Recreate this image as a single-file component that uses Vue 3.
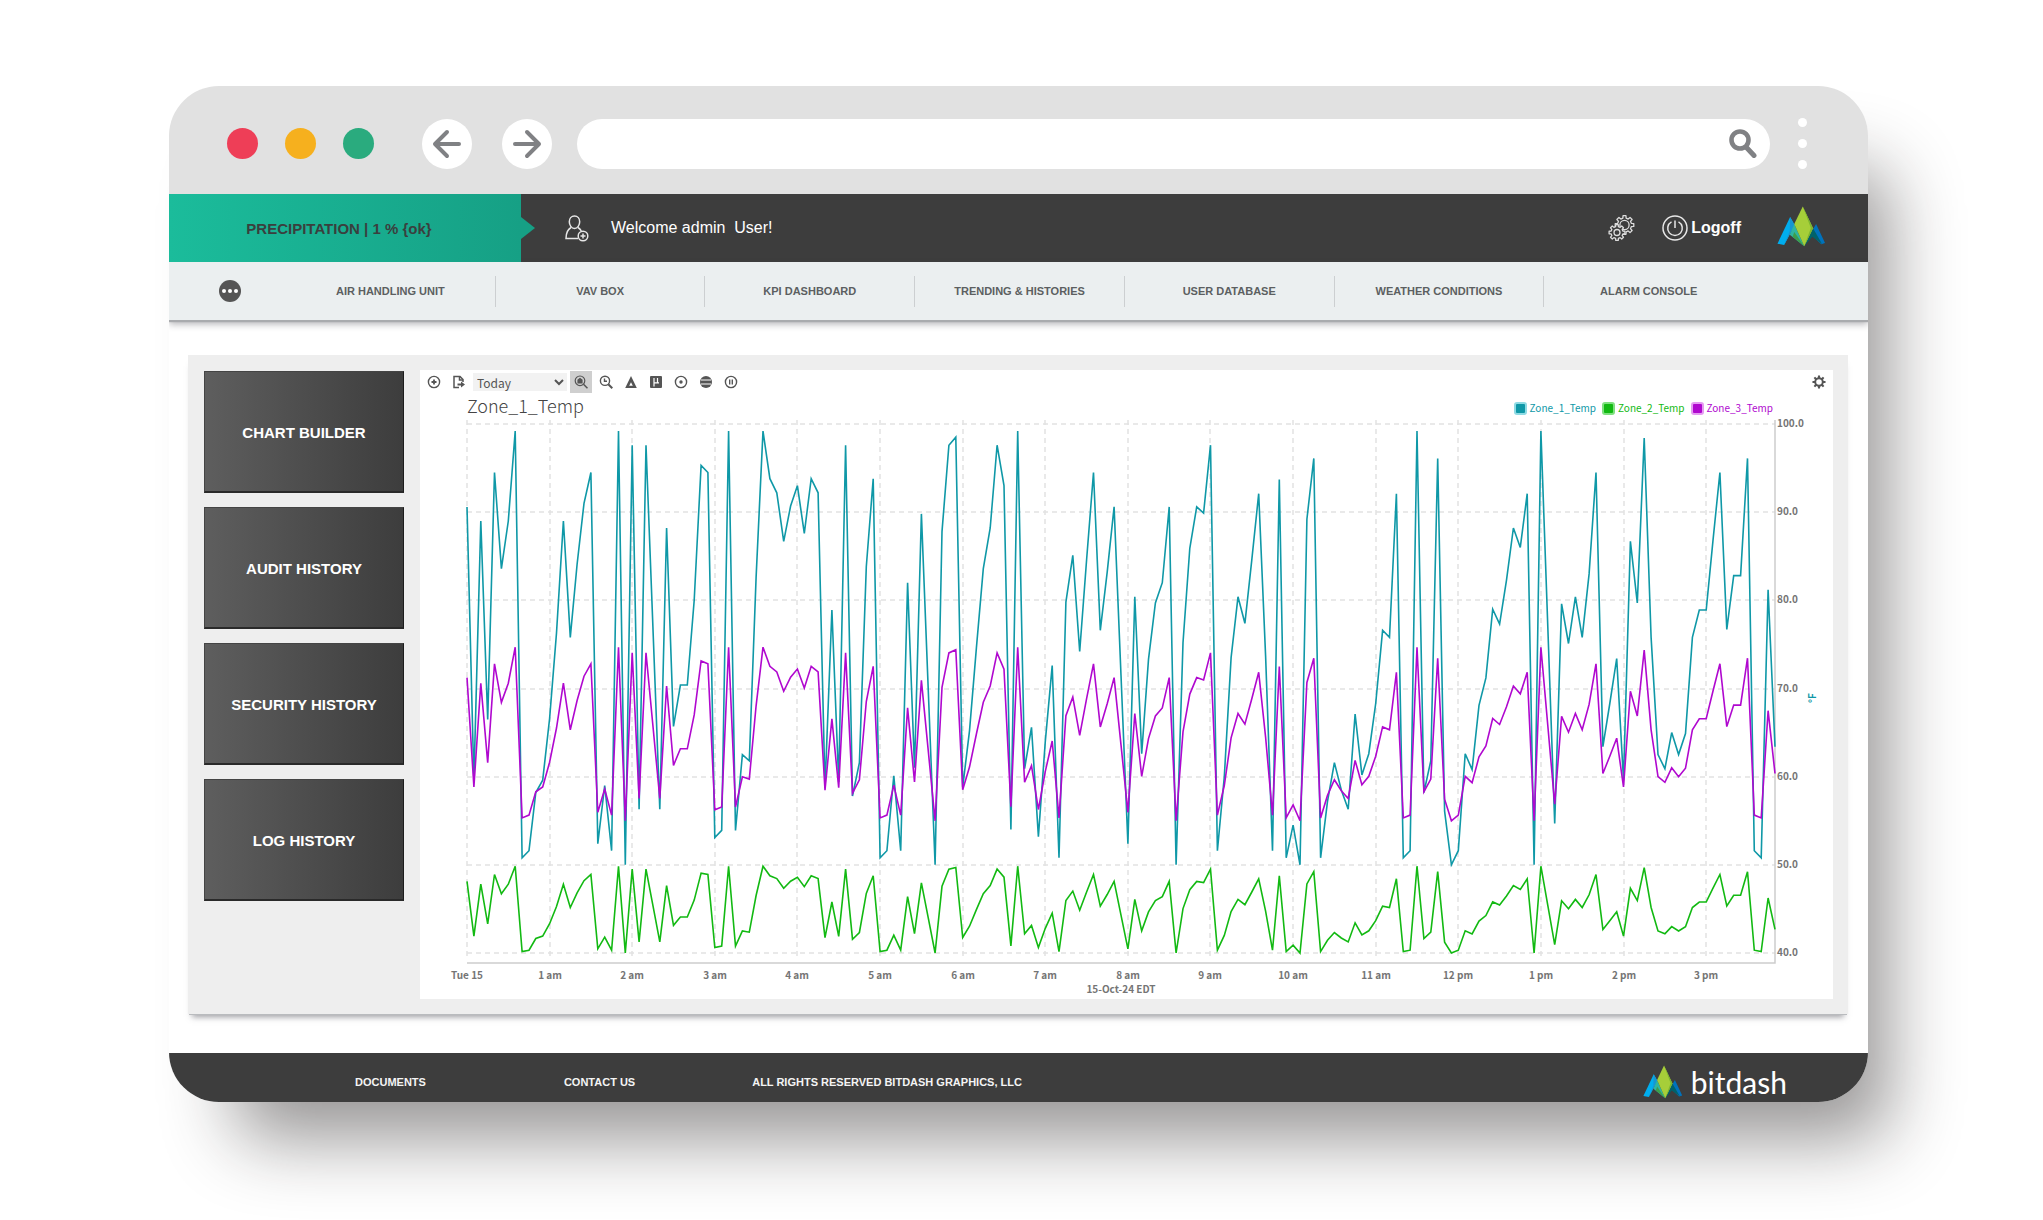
<script setup>
const navItems = [
  'AIR HANDLING UNIT',
  'VAV BOX',
  'KPI DASHBOARD',
  'TRENDING & HISTORIES',
  'USER DATABASE',
  'WEATHER CONDITIONS',
  'ALARM CONSOLE',
]

const historyButtons = ['CHART BUILDER', 'AUDIT HISTORY', 'SECURITY HISTORY', 'LOG HISTORY']

// Zone 1 temperature in °F, one sample every five minutes from midnight
const zone1 = [
  90.6, 59.6, 89, 66.5, 94.5, 83.6, 89, 99.2, 50.8, 51.6, 58.2, 59.6,
  66.6, 76.3, 89, 75.8, 84.1, 91, 94.5, 52.4, 59, 51.6, 99.2, 50,
  97.6, 56.3, 97.6, 77, 56.3, 88.2, 65.7, 70.4, 70.4, 80, 95.3, 94.5,
  53.1, 53.9, 99.2, 53.9, 62.5, 61.8, 82.6, 99.2, 93.8, 92.2, 86.7, 90.7,
  93, 87.6, 93.8, 92.2, 58.7, 78.9, 59.4, 97.6, 57.8, 61.6, 83.8, 93.8,
  50.8, 51.6, 60.1, 51.6, 82, 61, 89.8, 70, 50, 87.8, 97.6, 98.5,
  58.8, 65.2, 74.6, 83.6, 88.2, 97.6, 93, 54, 99.2, 60.9, 65.6, 53.2,
  64, 72.6, 50.8, 79.8, 85.1, 74.2, 84.6, 94.5, 76.6, 83.2, 90.6, 71.5,
  52.4, 80.4, 62.6, 73.3, 79.7, 82, 90.6, 50, 75.2, 85.9, 90.6, 89.9,
  97.6, 51.6, 60, 73.5, 80.4, 77.4, 84.6, 92.1, 73.7, 51.6, 93.7, 50.8,
  54.5, 50, 89.2, 96.1, 50.8, 57.2, 61.6, 58.5, 56.3, 67.1, 60.2, 62.6,
  68.3, 76.6, 75.8, 92.1, 50.8, 51.6, 99.2, 58.2, 61.8, 96.1, 56.1, 50,
  51.6, 62.6, 60.8, 68.1, 71.2, 79, 77.3, 82.3, 88.2, 86, 92.1, 50,
  99.2, 77, 54.7, 79.6, 75.1, 80.4, 75.8, 83, 94.5, 63.4, 68.3, 73.4,
  59.6, 86.7, 79.7, 98.4, 75.8, 62.5, 60.9, 65, 62.5, 64.9, 75.8, 78.9,
  78.9, 86.8, 94.5, 76.7, 82.8, 82.8, 96.1, 51.6, 50.8, 81.2, 63.4,
]

const plot = { left: 47, right: 1355, top: 6, hundred: 6, perDegree: 529 / 60, base: 545 }
const step = (plot.right - plot.left) / (zone1.length - 1)
const xAt = (i) => plot.left + i * step
const yAt = (v) => plot.hundred + (100 - v) * plot.perDegree
const line = (values) => values.map((v, i) => `${xAt(i).toFixed(1)},${yAt(v).toFixed(1)}`).join(' ')

const series = [
  { name: 'Zone_1_Temp', color: '#0f98a7', halo: '#8fdbe4', points: line(zone1) },
  { name: 'Zone_2_Temp', color: '#12b912', halo: '#7fe07f', points: line(zone1.map((v) => 40 + (v - 50) * 0.2)) },
  { name: 'Zone_3_Temp', color: '#b008cf', halo: '#e59af2', points: line(zone1.map((v) => 55 + (v - 50) * 0.4)) },
]

const hours = [
  'Tue 15', '1 am', '2 am', '3 am', '4 am', '5 am', '6 am', '7 am', '8 am',
  '9 am', '10 am', '11 am', '12 pm', '1 pm', '2 pm', '3 pm',
].map((label, i) => ({ label, x: Math.round(xAt(i * 12)) }))

const degrees = [100, 90, 80, 70, 60, 50, 40].map((v) => ({ label: v.toFixed(1), y: Math.round(yAt(v)) }))

// Outline of a cog wheel with rounded-looking teeth
function cog(cx, cy, teeth, outer, inner) {
  const pts = []
  const pitch = (Math.PI * 2) / teeth
  for (let i = 0; i < teeth; i++) {
    const a = i * pitch - Math.PI / 2
    ;[[-0.3, inner], [-0.2, outer], [0.2, outer], [0.3, inner]].forEach(([f, r]) => {
      pts.push(`${(cx + r * Math.cos(a + f * pitch)).toFixed(2)} ${(cy + r * Math.sin(a + f * pitch)).toFixed(2)}`)
    })
  }
  return `M${pts.join('L')}Z`
}
const settingsCog = cog(7, 7, 8, 6.6, 4.8)
const bigCog = cog(16.5, 10, 8, 9.4, 7)
const smallCog = cog(9, 17.5, 8, 8, 6)
</script>

<template>
  <main class="stage">
    <div class="window">
      <div class="chrome">
        <div class="lights">
          <span class="light red"></span>
          <span class="light amber"></span>
          <span class="light green"></span>
        </div>
        <div class="arrows">
          <button class="round" type="button" aria-label="Back">
            <svg width="30" height="30" viewBox="0 0 30 30" fill="none" stroke="#808184" stroke-width="4" stroke-linecap="round" stroke-linejoin="round"><path d="M27 15H4M15 3L3 15l12 12" /></svg>
          </button>
          <button class="round" type="button" aria-label="Forward">
            <svg width="30" height="30" viewBox="0 0 30 30" fill="none" stroke="#808184" stroke-width="4" stroke-linecap="round" stroke-linejoin="round"><path d="M3 15h23M15 3l12 12-12 12" /></svg>
          </button>
        </div>
        <div class="address">
          <input type="text" aria-label="Address" />
          <button type="button" aria-label="Search">
            <svg width="28" height="29" viewBox="0 0 28 29" fill="none" stroke="#808184"><circle cx="11" cy="11" r="8.5" stroke-width="4.6" /><path d="M17.500 18.500L25 26.500" stroke-width="5" stroke-linecap="round" /></svg>
          </button>
        </div>
        <button class="kebab" type="button" aria-label="Menu"><i></i><i></i><i></i></button>
      </div>

      <header class="topbar">
        <div class="weather">PRECIPITATION | 1 % {ok}</div>
        <div class="user">
          <svg width="24" height="27" viewBox="0 0 24 27" fill="none" stroke="#e6e6e6" stroke-width="1.500">
            <path d="M9.500 1c3.200 0 5.200 2.600 5.200 5.800S12.500 13.500 9.500 13.500 4.300 10 4.300 6.800 6.300 1 9.500 1z" />
            <path d="M6 12.500C2.500 14.500 1 17.500 1 23.500h12M13 12.500c1.500.9 2.600 2 3.300 3.500" />
            <circle cx="18" cy="21" r="4.800" /><path d="M18 18.500v5M15.500 21h5" />
          </svg>
          <span>Welcome admin&nbsp; User!</span>
        </div>
        <button class="plain" type="button" aria-label="Settings">
          <svg width="27" height="27" viewBox="0 0 27 27" fill="none" stroke="#dcdcdc" stroke-width="1.300" stroke-linejoin="round">
            <path :d="bigCog" /><circle cx="16.500" cy="10" r="4.600" />
            <path :d="smallCog" fill="#3d3d3d" /><circle cx="9" cy="17.500" r="3" />
          </svg>
        </button>
        <button class="plain logoff" type="button">
          <svg width="26" height="26" viewBox="0 0 26 26" fill="none" stroke="#e6e6e6" stroke-width="1.500">
            <circle cx="13" cy="13" r="12" /><path d="M9.500 6.800a7.300 7.300 0 1 0 7 0M13 5.500V13" />
          </svg>
          Logoff
        </button>
        <svg class="mark" width="49" height="41" viewBox="0 0 50 41" role="img" aria-label="Bitdash">
          <path d="M.5 38L13.400 10.700 18 19 7.300 39.300Z" fill="#00aeef" />
          <path d="M13.400 10.700L18 19 7.300 39.300 13 25Z" fill="#1795d1" />
          <path d="M17.600 18L27.800 40.700 13 29Z" fill="#2fb5a0" />
          <path d="M17.600 26L27.800 40.700 16 31Z" fill="#3d9e4a" />
          <path d="M39.900 18L49 37.300 45.200 38.700 34 28Z" fill="#0072bc" />
          <path d="M36.800 22.300L46 38.400 36 31 27.800 40.700Z" fill="#00626b" />
          <path d="M26.300 0L36.800 22.300 27.800 40.700 17.600 18Z" fill="#a6ce39" />
          <path d="M26.300 0L36.800 22.300 27.800 40.700 34.500 22Z" fill="#7db52f" />
        </svg>
      </header>

      <nav class="menu">
        <button class="more" type="button" aria-label="More"><i></i><i></i><i></i></button>
        <ul>
          <li v-for="item in navItems" :key="item"><a href="#">{{ item }}</a></li>
        </ul>
      </nav>

      <section class="panel">
        <div class="side">
          <button v-for="b in historyButtons" :key="b" type="button">{{ b }}</button>
        </div>

        <div class="card">
          <div class="tools">
            <button type="button" aria-label="Add"><svg viewBox="0 0 14 14" fill="none" stroke="#555" stroke-width="1.400"><circle cx="7" cy="7" r="5.600" /><path d="M7 4.500v5M4.500 7h5" stroke-width="1.800" /></svg></button>
            <button type="button" aria-label="Export"><svg viewBox="0 0 14 14" fill="none" stroke="#555" stroke-width="1.500"><path d="M11 7V4.500L8 1.500H2v11h5" /><path d="M7.500 1.500V5H11" /><path d="M5.500 9.500h4" stroke-width="2" /><path d="M9 6.500l4 3-4 3z" fill="#555" stroke="none" /></svg></button>
            <select aria-label="Time range"><option>Today</option></select>
            <button class="active" type="button" aria-label="Auto zoom"><svg viewBox="0 0 14 14" fill="none" stroke="#555" stroke-width="1.200"><circle cx="6" cy="5.800" r="4.800" /><path d="M9.500 9.300l4 4" stroke-width="1.600" /><path d="M4 8V5l2-1.500L8 5v3z" fill="#555" /></svg></button>
            <button type="button" aria-label="Time zoom"><svg viewBox="0 0 14 14" fill="none" stroke="#555" stroke-width="1.400"><circle cx="6" cy="5.800" r="4.600" /><path d="M9.300 9.200l4 4" stroke-width="2" /><path d="M5.500 3.500v2.800H8" /></svg></button>
            <button type="button" aria-label="Delta"><svg viewBox="0 0 14 14" fill="#555" fill-rule="evenodd"><path d="M7 1l5.800 12H1.200zM7 7.200L5.200 10.800h3.600z" /></svg></button>
            <button type="button" aria-label="Sampling"><svg viewBox="0 0 14 14"><rect x="1" y="1" width="12" height="12" rx="1" fill="#555" /><path d="M5 11.500V3v4.800h3.500V3M8.500 7.800H10" fill="none" stroke="#fff" stroke-width="1.200" /></svg></button>
            <button type="button" aria-label="Data point"><svg viewBox="0 0 14 14" fill="none" stroke="#555" stroke-width="1.400"><circle cx="7" cy="7" r="5.600" /><circle cx="7" cy="7" r="1" fill="#555" /></svg></button>
            <button type="button" aria-label="Status"><svg viewBox="0 0 14 14"><circle cx="7" cy="7" r="6" fill="#555" /><path d="M2 5h10M2 9h10" stroke="#fff" stroke-width="1" /></svg></button>
            <button type="button" aria-label="Pause"><svg viewBox="0 0 14 14" fill="none" stroke="#555" stroke-width="1.400"><circle cx="7" cy="7" r="5.600" /><path d="M5.700 4.500v5M8.300 4.500v5" /></svg></button>
            <button class="end" type="button" aria-label="Chart settings"><svg viewBox="0 0 14 14" fill="#555" fill-rule="evenodd"><path :d="settingsCog + 'M7 4.200a2.800 2.800 0 1 0 0 5.600 2.800 2.800 0 1 0 0-5.600z'" /></svg></button>
          </div>

          <div class="heading">
            <h1>Zone_1_Temp</h1>
            <ul class="legend">
              <li v-for="s in series" :key="s.name" :style="{ color: s.color }">
                <i :style="{ background: s.color, borderColor: s.halo }"></i>{{ s.name }}
              </li>
            </ul>
          </div>

          <svg class="chart" viewBox="0 0 1413 581">
            <g stroke="#e2e2e2" stroke-width="1.500" stroke-dasharray="5 4">
              <path v-for="h in hours" :key="h.label" :d="`M${h.x} 2V541`" />
              <path v-for="d in degrees" :key="d.label" :d="`M${plot.left} ${d.y}H${plot.right}`" />
            </g>
            <path :d="`M${plot.left} ${plot.base}H${plot.right}V2`" fill="none" stroke="#cdcdcd" stroke-width="1.500" />
            <polyline v-for="s in series" :key="s.name" :points="s.points" fill="none" :stroke="s.color" stroke-width="1.600" />
            <g class="ticks">
              <text v-for="h in hours" :key="h.label" :x="h.x" y="561" text-anchor="middle">{{ h.label }}</text>
              <text v-for="d in degrees" :key="d.label" x="1357" :y="d.y + 3">{{ d.label }}</text>
              <text x="701" y="575" text-anchor="middle">15-Oct-24 EDT</text>
              <text class="unit" transform="translate(1396 280) rotate(-90)" text-anchor="middle">°F</text>
            </g>
          </svg>
        </div>
      </section>

      <footer class="foot">
        <a class="docs" href="#">DOCUMENTS</a>
        <a class="contact" href="#">CONTACT US</a>
        <span>ALL RIGHTS RESERVED BITDASH GRAPHICS, LLC</span>
        <div class="brand">
          <svg width="40" height="34" viewBox="0 0 50 41" aria-hidden="true">
            <path d="M.5 38L13.400 10.700 18 19 7.300 39.300Z" fill="#00aeef" />
            <path d="M13.400 10.700L18 19 7.300 39.300 13 25Z" fill="#1795d1" />
            <path d="M17.600 18L27.800 40.700 13 29Z" fill="#2fb5a0" />
            <path d="M17.600 26L27.800 40.700 16 31Z" fill="#3d9e4a" />
            <path d="M39.900 18L49 37.300 45.200 38.700 34 28Z" fill="#0072bc" />
            <path d="M36.800 22.300L46 38.400 36 31 27.800 40.700Z" fill="#00626b" />
            <path d="M26.300 0L36.800 22.300 27.800 40.700 17.600 18Z" fill="#a6ce39" />
            <path d="M26.300 0L36.800 22.300 27.800 40.700 34.500 22Z" fill="#7db52f" />
          </svg>
          <span>bitdash</span>
        </div>
      </footer>
    </div>
  </main>
</template>

<style>
body {
  background: #fff;
  overflow-x: hidden;
}
</style>

<style scoped>
* {
  box-sizing: border-box;
}
button {
  padding: 0;
  border: 0;
  background: none;
  font: inherit;
  color: inherit;
  cursor: pointer;
}
ul {
  margin: 0;
  padding: 0;
  list-style: none;
}
svg {
  display: block;
  flex: none;
}
a {
  color: inherit;
  text-decoration: none;
}
.stage {
  padding: 86px 175px 118px 169px;
  font-family: "Liberation Sans", Arial, sans-serif;
}
.window {
  border-radius: 50px;
  background: #fff;
  overflow: hidden;
  box-shadow: 43px 60px 72px -23px rgba(25, 20, 20, 0.45);
}

/* browser frame */
.chrome {
  display: flex;
  align-items: center;
  height: 108px;
  padding: 7px 61px 0 58px;
  background: #e1e1e1;
}
.lights {
  display: flex;
  gap: 27px;
}
.light {
  width: 31px;
  height: 31px;
  border-radius: 50%;
}
.red { background: #ee3e57; }
.amber { background: #f6b01e; }
.green { background: #2aab7e; }
.arrows {
  display: flex;
  gap: 30px;
  margin: 0 25px 0 48px;
}
.round {
  display: grid;
  place-items: center;
  width: 50px;
  height: 50px;
  border-radius: 50%;
  background: #fff;
}
.address {
  flex: 1;
  display: flex;
  align-items: center;
  height: 50px;
  padding: 0 13px 0 24px;
  border-radius: 25px;
  background: #fff;
}
.address input {
  flex: 1;
  border: 0;
  outline: 0;
  background: none;
  font-size: 16px;
}
.kebab {
  display: flex;
  flex-direction: column;
  gap: 12px;
  margin-left: 28px;
}
.kebab i {
  width: 9px;
  height: 9px;
  border-radius: 50%;
  background: #fff;
}

/* dark header */
.topbar {
  display: flex;
  align-items: center;
  height: 68px;
  padding-right: 42px;
  background: #3d3d3d;
  color: #fff;
}
.weather {
  position: relative;
  display: grid;
  place-items: center;
  align-self: stretch;
  width: 352px;
  padding-right: 12px;
  background: linear-gradient(90deg, #1bbc9b, #16a085);
  color: #3a3f3e;
  font-size: 15px;
  font-weight: bold;
}
.weather::after {
  content: "";
  position: absolute;
  left: 100%;
  top: 50%;
  margin-top: -11px;
  border: 11px solid transparent;
  border-left: 14px solid #16a085;
  border-right: 0;
}
.user {
  display: flex;
  align-items: center;
  gap: 22px;
  margin: 0 auto 0 44px;
  font-size: 16px;
}
.logoff {
  display: flex;
  align-items: center;
  gap: 3px;
  margin: 0 36px 0 27px;
  font-size: 16px;
  font-weight: bold;
}
.mark {
  margin-bottom: 4px;
}

/* menu strip */
.menu {
  display: flex;
  align-items: center;
  height: 58px;
  padding: 0 115px 0 50px;
  background: #ebeff0;
  color: #5c5f61;
  box-shadow: 0 2px 1px #a9abae, 0 4px 7px rgba(60, 60, 70, 0.4);
}
.more {
  display: flex;
  align-items: center;
  justify-content: center;
  gap: 2px;
  width: 22px;
  height: 22px;
  border-radius: 50%;
  background: #555;
}
.more i {
  width: 4px;
  height: 4px;
  border-radius: 50%;
  background: #fff;
}
.menu ul {
  flex: 1;
  display: flex;
  margin-left: 45px;
}
.menu li {
  flex: 1;
  text-align: center;
  font-size: 11px;
  font-weight: bold;
  line-height: 31px;
}
.menu li + li {
  border-left: 1px solid #cccfd1;
}

/* main panel */
.panel {
  display: flex;
  gap: 16px;
  margin: 35px 20px 39px 19px;
  padding: 15px 15px 15px 16px;
  background: #eee;
  box-shadow: 0 2px 0 -1px #b9bbbe, 0 7px 6px -4px rgba(60, 60, 70, 0.5);
}
.side {
  display: flex;
  flex-direction: column;
  gap: 14px;
  width: 200px;
  flex: none;
  padding-top: 1px;
}
.side button {
  height: 122px;
  padding-top: 2px;
  border: 1px solid #444;
  border-right-color: #1c1c1c;
  border-bottom: 2px solid #2a2a2a;
  background: linear-gradient(90deg, #5e5e5e, #3d3d3d);
  color: #fff;
  font-size: 15px;
  font-weight: bold;
}
.card {
  flex: 1;
  min-width: 0;
  background: #fff;
}
.tools {
  display: flex;
  align-items: center;
  gap: 3px;
  height: 24px;
  padding: 0 3px;
}
.tools button {
  display: grid;
  place-items: center;
  width: 22px;
  height: 22px;
}
.tools svg {
  width: 14px;
  height: 14px;
}
.tools .active {
  background: #cfcfcf;
}
.tools .end {
  margin-left: auto;
}
.tools select {
  width: 94px;
  height: 18px;
  padding: 0;
  border: 0;
  background: #f2f2f2;
  color: #555;
  font: 12px "Noto Sans CJK SC", sans-serif;
}
.heading {
  display: flex;
  justify-content: space-between;
  height: 24px;
  padding: 0 60px 0 47px;
  font-family: "Noto Sans CJK SC", "Noto Sans", sans-serif;
}
h1 {
  margin: 0;
  color: #444;
  font-size: 18px;
  font-weight: 300;
  line-height: 23px;
}
.legend {
  display: flex;
  align-self: flex-end;
  gap: 6px;
  font-size: 10px;
  line-height: 20px;
}
.legend li {
  display: flex;
  align-items: center;
  gap: 3px;
}
.legend i {
  width: 13px;
  height: 13px;
  border: 2px solid;
  border-radius: 3px;
}
.chart {
  width: 100%;
  height: auto;
  overflow: visible;
}
.ticks {
  fill: #757575;
  font: bold 10px "Noto Sans CJK SC", "Noto Sans", sans-serif;
}
.unit {
  fill: #0f98a7;
}

/* footer */
.foot {
  display: flex;
  align-items: center;
  height: 49px;
  padding: 9px 81px 0 186px;
  background: #3d3d3d;
  color: #f4f4f4;
  font-size: 11px;
  font-weight: bold;
}
.docs {
  margin-right: 138px;
}
.contact {
  margin-right: 117px;
}
.brand {
  display: flex;
  align-items: center;
  gap: 8px;
  margin-left: auto;
  color: #fff;
  font: 30px/34px Lato, sans-serif;
}
</style>
